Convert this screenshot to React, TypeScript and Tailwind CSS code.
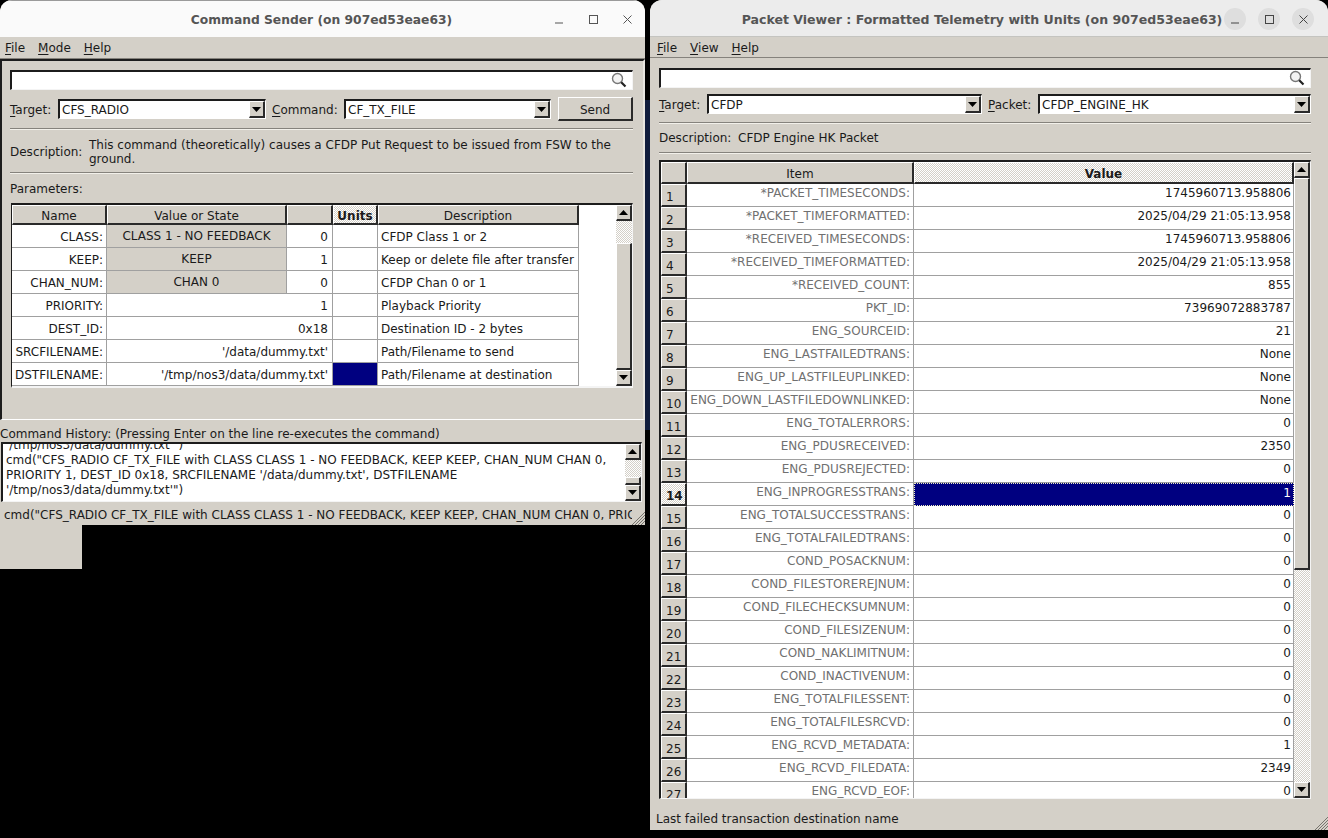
const checker =
  "bg-[image:repeating-conic-gradient(#d4d0c8_0_25%,#ffffff_0_50%)] bg-[length:2px_2px]";
const raised = "border-t border-l border-t-white border-l-white border-r-2 border-b-2 border-r-[#2a2a2a] border-b-[#2a2a2a]";

const params = [
  { name: "CLASS:", state: "CLASS 1 - NO FEEDBACK", value: "0", desc: "CFDP Class 1 or 2" },
  { name: "KEEP:", state: "KEEP", value: "1", desc: "Keep or delete file after transfer" },
  { name: "CHAN_NUM:", state: "CHAN 0", value: "0", desc: "CFDP Chan 0 or 1" },
  { name: "PRIORITY:", value: "1", desc: "Playback Priority" },
  { name: "DEST_ID:", value: "0x18", desc: "Destination ID - 2 bytes" },
  { name: "SRCFILENAME:", value: "'/data/dummy.txt'", desc: "Path/Filename to send" },
  { name: "DSTFILENAME:", value: "'/tmp/nos3/data/dummy.txt'", desc: "Path/Filename at destination", selected: true },
];

const telemetry = [
  ["*PACKET_TIMESECONDS:", "1745960713.958806"],
  ["*PACKET_TIMEFORMATTED:", "2025/04/29 21:05:13.958"],
  ["*RECEIVED_TIMESECONDS:", "1745960713.958806"],
  ["*RECEIVED_TIMEFORMATTED:", "2025/04/29 21:05:13.958"],
  ["*RECEIVED_COUNT:", "855"],
  ["PKT_ID:", "73969072883787"],
  ["ENG_SOURCEID:", "21"],
  ["ENG_LASTFAILEDTRANS:", "None"],
  ["ENG_UP_LASTFILEUPLINKED:", "None"],
  ["ENG_DOWN_LASTFILEDOWNLINKED:", "None"],
  ["ENG_TOTALERRORS:", "0"],
  ["ENG_PDUSRECEIVED:", "2350"],
  ["ENG_PDUSREJECTED:", "0"],
  ["ENG_INPROGRESSTRANS:", "1"],
  ["ENG_TOTALSUCCESSTRANS:", "0"],
  ["ENG_TOTALFAILEDTRANS:", "0"],
  ["COND_POSACKNUM:", "0"],
  ["COND_FILESTOREREJNUM:", "0"],
  ["COND_FILECHECKSUMNUM:", "0"],
  ["COND_FILESIZENUM:", "0"],
  ["COND_NAKLIMITNUM:", "0"],
  ["COND_INACTIVENUM:", "0"],
  ["ENG_TOTALFILESSENT:", "0"],
  ["ENG_TOTALFILESRCVD:", "0"],
  ["ENG_RCVD_METADATA:", "1"],
  ["ENG_RCVD_FILEDATA:", "2349"],
  ["ENG_RCVD_EOF:", "0"],
];

const Mn = ({ children }: { children: string }) => (
  <span className="underline decoration-1 underline-offset-2">{children}</span>
);

const Magnifier = () => (
  <svg width="16" height="16" viewBox="0 0 16 16" className="shrink-0">
    <circle cx="6.5" cy="6.5" r="5" fill="#f2f2f2" stroke="#777" strokeWidth="1.4" />
    <path d="M10.2 10.2 L14.5 14.5" stroke="#222" strokeWidth="2.2" />
  </svg>
);

const ArrowBtn = ({ up, className = "" }: { up?: boolean; className?: string }) => (
  <div className={`flex h-[16px] w-[16px] shrink-0 items-center justify-center bg-[#d4d0c8] ${raised} ${className}`}>
    <svg width="9" height="5" viewBox="0 0 9 5">
      <path d={up ? "M4.5 0 L9 5 L0 5 Z" : "M0 0 L9 0 L4.5 5 Z"} fill="#000" />
    </svg>
  </div>
);

const SearchBox = ({ className = "" }: { className?: string }) => (
  <div className={`flex h-[20px] items-center justify-end border-t-2 border-l-2 border-t-[#1c1c1c] border-l-[#1c1c1c] border-b border-r border-b-[#f4f4f4] border-r-[#f4f4f4] bg-white pr-[5px] pb-[2px] ${className}`}>
    <Magnifier />
  </div>
);

const Combo = ({ value, className = "" }: { value: string; className?: string }) => (
  <div className={`flex h-[20px] shrink-0 items-center border-t-2 border-l-2 border-t-[#1c1c1c] border-l-[#1c1c1c] border-b border-r border-b-white border-r-white bg-white pl-[2px] ${className}`}>
    <span className="flex-1 overflow-hidden whitespace-nowrap">{value}</span>
    <div className={`flex h-[17px] w-[16px] shrink-0 items-center justify-center bg-[#d4d0c8] ${raised}`}>
      <svg width="9" height="5" viewBox="0 0 9 5">
        <path d="M0 0 L9 0 L4.5 5 Z" fill="#000" />
      </svg>
    </div>
  </div>
);

const Sep = ({ className = "" }: { className?: string }) => (
  <div className={`h-[2px] border-t border-b border-t-[#85827c] border-b-[#f2f0ea] ${className}`} />
);

const Grip = () => (
  <svg width="14" height="14" viewBox="0 0 14 14" className="absolute right-0 bottom-0">
    <path d="M14 1 L1 14 M14 4 L4 14 M14 7 L7 14 M14 10 L10 14" stroke="#77746e" strokeWidth="1" />
  </svg>
);

const HeadCell = ({ children, active, className = "" }: { children?: string; active?: boolean; className?: string }) => (
  <div
    className={`flex h-full shrink-0 items-center justify-center pt-[2px] ${raised} ${active ? `font-bold ${checker}` : "bg-[#d4d0c8]"} ${className}`}
  >
    {children}
  </div>
);

const cell = "shrink-0 border-r border-b border-[#a0a0a0]";

const ParamRow = ({ p }: { p: (typeof params)[number] }) => (
  <div className="flex h-[23px]">
    <div className={`flex w-[95px] items-center justify-end pt-[2px] pr-[3px] ${cell}`}>{p.name}</div>
    {p.state ? (
      <>
        <div className={`flex w-[180px] items-center justify-center bg-[#d4d0c8] ${cell}`}>{p.state}</div>
        <div className={`flex w-[46px] items-center justify-end pt-[2px] pr-[4px] ${cell}`}>{p.value}</div>
      </>
    ) : (
      <div className={`flex w-[226px] items-center justify-end pt-[2px] pr-[4px] ${cell}`}>{p.value}</div>
    )}
    <div className={`w-[45px] ${cell} ${p.selected ? "bg-[#000080]" : ""}`} />
    <div className={`flex w-[201px] items-center pt-[2px] pl-[3px] whitespace-nowrap ${cell}`}>{p.desc}</div>
  </div>
);

const CommandSender = () => (
  <div className="absolute top-0 left-0 flex h-[525px] w-[645px] flex-col overflow-hidden rounded-t-[12px] bg-[#d4d0c8]">
    <div className="relative flex h-[37px] shrink-0 items-center border-t border-t-[#9a9a9a] bg-[#fafafa]">
      <div className="flex-1 pt-[3px] pr-[2px] text-center text-[12.3px] font-bold text-[#555]">Command Sender (on 907ed53eae63)</div>
      <div className="absolute right-[13px] flex items-center gap-[25px]">
        <svg width="9" height="9" viewBox="0 0 9 9"><path d="M0 8 H8" stroke="#555" strokeWidth="1" /></svg>
        <svg width="9" height="9" viewBox="0 0 9 9"><rect x="0.5" y="0.5" width="8" height="8" fill="none" stroke="#555" /></svg>
        <svg width="9" height="9" viewBox="0 0 9 9"><path d="M0.5 0.5 L8.5 8.5 M8.5 0.5 L0.5 8.5" stroke="#555" /></svg>
      </div>
    </div>
    <div className="flex h-[22px] shrink-0 items-start gap-[13px] border-b border-b-[#85827c] pt-[2px] pl-[5px]">
      <span><Mn>F</Mn>ile</span>
      <span><Mn>M</Mn>ode</span>
      <span><Mn>H</Mn>elp</span>
    </div>
    <div className="flex h-[361px] shrink-0 flex-col border-t-2 border-l-2 border-t-[#1c1c1c] border-l-[#1c1c1c] border-b border-r-2 border-r-[#e8e6e0] border-b-white pt-[9px] pr-[10px] pl-[8px]">
      <SearchBox />
      <div className="mt-[7px] flex h-[24px] items-center">
        <span className="w-[48px] pt-[2px]"><Mn>T</Mn>arget:</span>
        <Combo value="CFS_RADIO" className="w-[208px]" />
        <span className="ml-[6px] w-[72px] pt-[2px]"><Mn>C</Mn>ommand:</span>
        <Combo value="CF_TX_FILE" className="w-[207px]" />
        <div className={`ml-[7px] flex h-[24px] flex-1 items-center justify-center bg-[#d4d0c8] pt-[2px] ${raised}`}>Send</div>
      </div>
      <Sep className="mt-[7px]" />
      <div className="mt-[7px] flex h-[28px] items-center pt-[2px]">
        <span className="w-[79px] shrink-0">Description:</span>
        <p className="leading-[14px]">
          This command (theoretically) causes a CFDP Put Request to be issued from FSW to the ground.
        </p>
      </div>
      <Sep className="mt-[7px]" />
      <div className="mt-[8px] h-[14px] leading-[14px]">Parameters:</div>
      <div className="mt-[7px] ml-[1px] flex h-[185px] w-[622px] border-t-2 border-l border-t-[#1c1c1c] border-l-[#1c1c1c] border-b-2 border-r border-b-[#f4f4f4] border-r-[#f4f4f4] bg-white">
        <div className="flex min-w-0 flex-1 flex-col">
          <div className="flex h-[20px] shrink-0">
            <HeadCell className="w-[95px]">Name</HeadCell>
            <HeadCell className="w-[180px]">Value or State</HeadCell>
            <HeadCell className="w-[46px]" />
            <HeadCell active className="w-[45px]">Units</HeadCell>
            <HeadCell className="w-[201px]">Description</HeadCell>
          </div>
          {params.map((p) => (
            <ParamRow key={p.name} p={p} />
          ))}
        </div>
        <div className="flex w-[16px] shrink-0 flex-col">
          <ArrowBtn up />
          <div className={`h-[22px] shrink-0 ${checker}`} />
          <div className={`flex-1 bg-[#d4d0c8] ${raised}`} />
          <ArrowBtn />
        </div>
      </div>
    </div>
    <div className="h-[22px] shrink-0 pt-[7px] leading-[14px] whitespace-nowrap">
      Command History: (Pressing Enter on the line re-executes the command)
    </div>
    <div className="ml-[1px] flex h-[60px] w-[641px] shrink-0 border-t-2 border-l-2 border-t-[#1c1c1c] border-l-[#1c1c1c] border-b border-r border-b-[#f4f4f4] border-r-[#f4f4f4] bg-white">
      <div className="min-w-0 flex-1 overflow-hidden pl-[3px] leading-[15px] whitespace-nowrap">
        <div className="-mt-[6px]">'/tmp/nos3/data/dummy.txt'")</div>
        <div>cmd("CFS_RADIO CF_TX_FILE with CLASS CLASS 1 - NO FEEDBACK, KEEP KEEP, CHAN_NUM CHAN 0,</div>
        <div>PRIORITY 1, DEST_ID 0x18, SRCFILENAME '/data/dummy.txt', DSTFILENAME</div>
        <div>'/tmp/nos3/data/dummy.txt'")</div>
      </div>
      <div className="flex w-[16px] shrink-0 flex-col">
        <ArrowBtn up />
        <div className={`h-[17px] shrink-0 ${checker}`} />
        <div className={`flex-1 bg-[#d4d0c8] ${raised}`} />
        <ArrowBtn />
      </div>
    </div>
    <div className="mt-[6px] w-[632px] overflow-hidden pl-[4px] leading-[14px] whitespace-nowrap">
      cmd("CFS_RADIO CF_TX_FILE with CLASS CLASS 1 - NO FEEDBACK, KEEP KEEP, CHAN_NUM CHAN 0, PRIO
    </div>
    <Grip />
  </div>
);

const TelemetryRow = ({ n, item, value }: { n: number; item: string; value: string }) => {
  const selected = n === 14;
  return (
    <div className="flex h-[23px] shrink-0">
      <div
        className={`flex w-[26px] shrink-0 items-center pt-[3px] pl-[4px] ${raised} ${selected ? `font-bold ${checker}` : "bg-[#d4d0c8]"}`}
      >
        {n}
      </div>
      <div className="flex w-[227px] shrink-0 items-start justify-end border-r border-b border-[#a0a0a0] pr-[3px] whitespace-nowrap text-[#707070]">
        {item}
      </div>
      <div
        className={`flex w-[380px] shrink-0 items-start justify-end pr-[2px] ${
          selected
            ? "border border-dotted border-[#f0f0c0] bg-[#000080] text-white"
            : "border-r border-b border-[#a0a0a0]"
        }`}
      >
        {value}
      </div>
    </div>
  );
};

const PacketViewer = () => (
  <div className="absolute top-0 left-[650px] flex h-[830px] w-[678px] flex-col overflow-hidden rounded-t-[12px] bg-[#d4d0c8]">
    <div className="relative flex h-[37px] shrink-0 items-center border-b border-b-[#c4c4c0] bg-[#ececec]">
      <div className="flex-1 pt-[4px] pr-[14px] text-center text-[12.55px] font-bold text-[#555]">
        Packet Viewer : Formatted Telemetry with Units (on 907ed53eae63)
      </div>
      <div className="absolute right-[14px] top-[8px] flex items-center gap-[12px]">
        <div className="flex size-[22px] items-center justify-center rounded-full bg-[#dedede]">
          <svg width="9" height="9" viewBox="0 0 9 9"><path d="M0 8 H8" stroke="#444" /></svg>
        </div>
        <div className="flex size-[22px] items-center justify-center rounded-full bg-[#dedede]">
          <svg width="9" height="9" viewBox="0 0 9 9"><rect x="0.5" y="0.5" width="8" height="8" fill="none" stroke="#444" /></svg>
        </div>
        <div className="flex size-[22px] items-center justify-center rounded-full bg-[#dedede]">
          <svg width="9" height="9" viewBox="0 0 9 9"><path d="M0.5 0.5 L8.5 8.5 M8.5 0.5 L0.5 8.5" stroke="#444" /></svg>
        </div>
      </div>
    </div>
    <div className="flex h-[21px] shrink-0 items-start gap-[13px] border-b border-b-[#85827c] pt-[2px] pl-[7px]">
      <span><Mn>F</Mn>ile</span>
      <span><Mn>V</Mn>iew</span>
      <span><Mn>H</Mn>elp</span>
    </div>
    <div className="flex w-[661px] shrink-0 flex-col pt-[10px] pl-[9px]">
      <SearchBox />
      <div className="mt-[6px] flex h-[20px] items-center">
        <span className="w-[48px] pt-[2px]"><Mn>T</Mn>arget:</span>
        <Combo value="CFDP" className="w-[275px]" />
        <span className="ml-[6px] w-[50px] pt-[2px]"><Mn>P</Mn>acket:</span>
        <Combo value="CFDP_ENGINE_HK" className="w-[273px]" />
      </div>
      <Sep className="mt-[8px]" />
      <div className="mt-[2px] flex h-[22px] items-center pt-[2px]">
        <span className="w-[79px]">Description:</span>
        <span>CFDP Engine HK Packet</span>
      </div>
      <Sep className="mt-[4px]" />
      <div className="mt-[6px] flex h-[639px] w-[652px] overflow-hidden border-t-2 border-l-2 border-t-[#1c1c1c] border-l-[#1c1c1c] border-b border-r border-b-[#f4f4f4] border-r-[#f4f4f4] bg-white">
        <div className="flex w-[633px] shrink-0 flex-col overflow-hidden">
          <div className="flex h-[22px] shrink-0">
            <HeadCell className="w-[26px]" />
            <HeadCell className="w-[227px]">Item</HeadCell>
            <HeadCell active className="w-[380px]">Value</HeadCell>
          </div>
          {telemetry.map(([item, value], i) => (
            <TelemetryRow key={item} n={i + 1} item={item} value={value} />
          ))}
        </div>
        <div className="flex w-[16px] shrink-0 flex-col">
          <ArrowBtn up />
          <div className={`h-[392px] shrink-0 bg-[#d4d0c8] ${raised}`} />
          <div className={`flex-1 ${checker}`} />
          <ArrowBtn />
        </div>
      </div>
    </div>
    <div className="mt-[13px] pl-[6px] leading-[14px]">Last failed transaction destination name</div>
    <Grip />
  </div>
);

export default function App() {
  return (
    <div className="relative h-[838px] w-[1328px] overflow-hidden bg-black font-['DejaVu_Sans',sans-serif] text-[12px] text-[#1a1a1a]">
      <div className="absolute top-[100px] left-[645px] h-[330px] w-[5px] bg-[#101c3c]" />
      <div className="absolute top-[525px] left-0 h-[44px] w-[82px] bg-[#d4d0c8]" />
      <CommandSender />
      <PacketViewer />
    </div>
  );
}
